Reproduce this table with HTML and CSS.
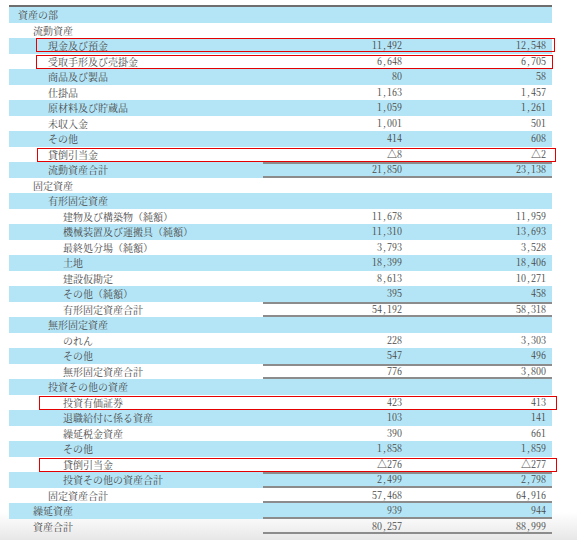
FILE: index.html
```html
<!DOCTYPE html>
<html lang="ja">
<head>
<meta charset="utf-8">
<title>資産の部</title>
<link rel="stylesheet" href="styles.css">
</head>
<body>
<div class="sheet">
  <div class="row blue"><div class="label l0">資産の部</div><div class="num"></div><div class="num"></div></div>
  <div class="row"><div class="label l1">流動資産</div><div class="num"></div><div class="num"></div></div>
  <div class="row blue"><div class="label l2">現金及び預金</div><div class="num">11,492</div><div class="num">12,548</div><span class="mark m1"></span></div>
  <div class="row"><div class="label l2">受取手形及び売掛金</div><div class="num">6,648</div><div class="num">6,705</div><span class="mark m2"></span></div>
  <div class="row blue"><div class="label l2">商品及び製品</div><div class="num">80</div><div class="num">58</div></div>
  <div class="row"><div class="label l2">仕掛品</div><div class="num">1,163</div><div class="num">1,457</div></div>
  <div class="row blue"><div class="label l2">原材料及び貯蔵品</div><div class="num">1,059</div><div class="num">1,261</div></div>
  <div class="row"><div class="label l2">未収入金</div><div class="num">1,001</div><div class="num">501</div></div>
  <div class="row blue"><div class="label l2">その他</div><div class="num">414</div><div class="num">608</div></div>
  <div class="row"><div class="label l2">貸倒引当金</div><div class="num">△8</div><div class="num">△2</div><span class="mark m3"></span></div>
  <div class="row blue top bot"><div class="label l2">流動資産合計</div><div class="num">21,850</div><div class="num">23,138</div></div>
  <div class="row"><div class="label l1">固定資産</div><div class="num"></div><div class="num"></div></div>
  <div class="row blue"><div class="label l2">有形固定資産</div><div class="num"></div><div class="num"></div></div>
  <div class="row"><div class="label l3">建物及び構築物（純額）</div><div class="num">11,678</div><div class="num">11,959</div></div>
  <div class="row blue"><div class="label l3">機械装置及び運搬具（純額）</div><div class="num">11,310</div><div class="num">13,693</div></div>
  <div class="row"><div class="label l3">最終処分場（純額）</div><div class="num">3,793</div><div class="num">3,528</div></div>
  <div class="row blue"><div class="label l3">土地</div><div class="num">18,399</div><div class="num">18,406</div></div>
  <div class="row"><div class="label l3">建設仮勘定</div><div class="num">8,613</div><div class="num">10,271</div></div>
  <div class="row blue"><div class="label l3">その他（純額）</div><div class="num">395</div><div class="num">458</div></div>
  <div class="row top bot"><div class="label l3">有形固定資産合計</div><div class="num">54,192</div><div class="num">58,318</div></div>
  <div class="row blue"><div class="label l2">無形固定資産</div><div class="num"></div><div class="num"></div></div>
  <div class="row"><div class="label l3">のれん</div><div class="num">228</div><div class="num">3,303</div></div>
  <div class="row blue"><div class="label l3">その他</div><div class="num">547</div><div class="num">496</div></div>
  <div class="row top bot"><div class="label l3">無形固定資産合計</div><div class="num">776</div><div class="num">3,800</div></div>
  <div class="row blue"><div class="label l2">投資その他の資産</div><div class="num"></div><div class="num"></div></div>
  <div class="row"><div class="label l3">投資有価証券</div><div class="num">423</div><div class="num">413</div><span class="mark m4"></span></div>
  <div class="row blue"><div class="label l3">退職給付に係る資産</div><div class="num">103</div><div class="num">141</div></div>
  <div class="row"><div class="label l3">繰延税金資産</div><div class="num">390</div><div class="num">661</div></div>
  <div class="row blue"><div class="label l3">その他</div><div class="num">1,858</div><div class="num">1,859</div></div>
  <div class="row"><div class="label l3">貸倒引当金</div><div class="num">△276</div><div class="num">△277</div><span class="mark m5"></span></div>
  <div class="row blue top bot"><div class="label l3">投資その他の資産合計</div><div class="num">2,499</div><div class="num">2,798</div></div>
  <div class="row bot"><div class="label l2">固定資産合計</div><div class="num">57,468</div><div class="num">64,916</div></div>
  <div class="row blue bot"><div class="label l1">繰延資産</div><div class="num">939</div><div class="num">944</div></div>
  <div class="row bot"><div class="label l1">資産合計</div><div class="num">80,257</div><div class="num">88,999</div></div>
</div>
</body>
</html>
```
FILE: styles.css
```css
html {
  min-height: 100%;
  background: linear-gradient(to bottom, #ffffff 0, #ffffff 512px, #e7e7e7 540px) no-repeat;
}
body {
  margin: 0;
  padding: 5px 0 0 9px;
  color: #454545;
}
.sheet {
  width: 543px;
  border-top: 2px solid #6e6e6e;
}
.row {
  position: relative;
  display: grid;
  grid-template-columns: 254px 144px 145px;
  height: 15.5px;
  line-height: 15.5px;
}
.row.blue {
  background: #b4e5f6;
}
.label {
  font-family: "Noto Serif CJK JP", "Noto Sans CJK JP", serif;
  font-size: 10px;
  white-space: nowrap;
  color: #4a4a4a;
}
.l0 { padding-left: 9px; }
.l1 { padding-left: 24px; }
.l2 { padding-left: 39px; }
.l3 { padding-left: 54px; }
.num {
  font-family: "Noto Serif CJK JP", "Liberation Serif", serif;
  font-feature-settings: "hwid" 1;
  font-size: 10px;
  line-height: 13.5px;
  text-align: right;
  padding-right: 5px;
  white-space: nowrap;
  color: #4a4a4a;
}
.num + .num {
  padding-right: 6px;
}
.row.top .num {
  box-shadow: inset 0 2px 0 #8c8c8c;
}
.row.bot .num {
  box-shadow: inset 0 -2px 0 #8c8c8c;
}
.row.top.bot .num {
  box-shadow: inset 0 2px 0 #8c8c8c, inset 0 -2px 0 #8c8c8c;
}
.mark {
  position: absolute;
  border: 1px solid #e40000;
  box-sizing: border-box;
  pointer-events: none;
}
.m1 { left: 27px; top: -0.5px; width: 519px; height: 14.5px; }
.m2 { left: 27px; top: 1.5px; width: 517px; height: 13.5px; }
.m3 { left: 28px; top: 1px; width: 519px; height: 14.5px; }
.m4 { left: 30px; top: 1px; width: 518px; height: 14.5px; }
.m5 { left: 30px; top: 1px; width: 518px; height: 14.5px; }
```
